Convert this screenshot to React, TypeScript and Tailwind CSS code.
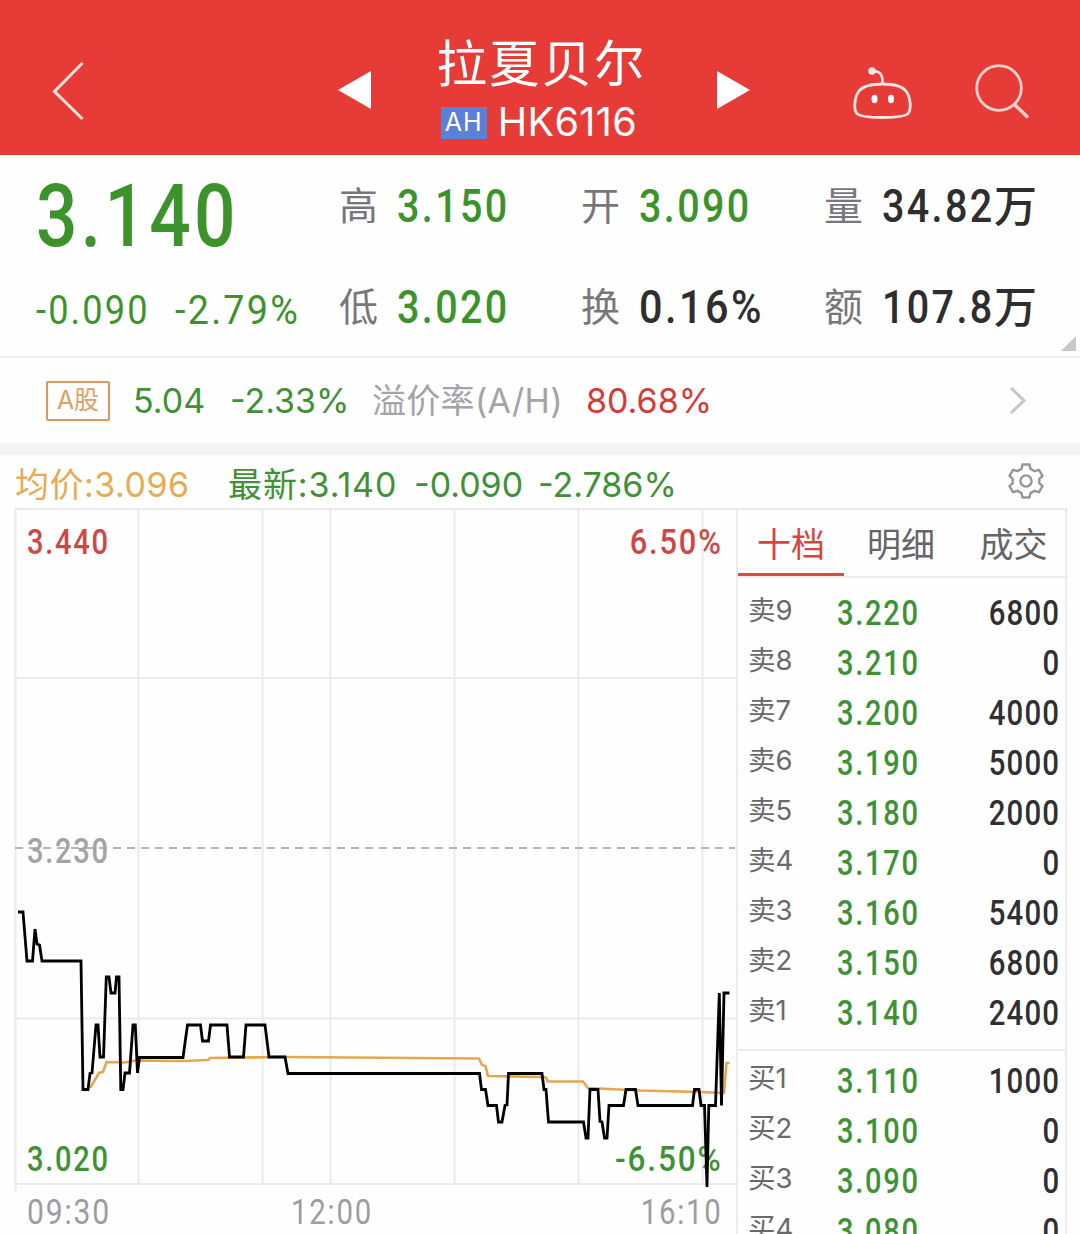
import type { ReactNode } from "react";
import { clsx } from "clsx";

type Level = { label: string; price: string; volume: string };

const SELLS: Level[] = [
  { label: "卖9", price: "3.220", volume: "6800" },
  { label: "卖8", price: "3.210", volume: "0" },
  { label: "卖7", price: "3.200", volume: "4000" },
  { label: "卖6", price: "3.190", volume: "5000" },
  { label: "卖5", price: "3.180", volume: "2000" },
  { label: "卖4", price: "3.170", volume: "0" },
  { label: "卖3", price: "3.160", volume: "5400" },
  { label: "卖2", price: "3.150", volume: "6800" },
  { label: "卖1", price: "3.140", volume: "2400" },
];

const BUYS: Level[] = [
  { label: "买1", price: "3.110", volume: "1000" },
  { label: "买2", price: "3.100", volume: "0" },
  { label: "买3", price: "3.090", volume: "0" },
  { label: "买4", price: "3.080", volume: "0" },
];

const STATS = [
  { label: "高", value: "3.150", green: true },
  { label: "开", value: "3.090", green: true },
  { label: "量", value: "34.82", unit: "万" },
  { label: "低", value: "3.020", green: true },
  { label: "换", value: "0.16%" },
  { label: "额", value: "107.8", unit: "万" },
];

// Plot coordinates, relative to the top left corner of the chart.
const PRICE_LINE =
  "18,405 23,405 27,454 32.5,454 35,422 37,437 39.5,438 42,454 81,454 83,582.5 88,582.5 90,566.5 92,566 96,518 98,518 100,550 103.5,550 106.3,470 109,470 111,486 115,486 116.5,470 119,470 120.8,582.5 123,582.5 125,566 129.5,566 133,518 135.3,518 137.5,566 139.5,550.5 183,550.5 187.5,518 200.5,518 202.5,534 208.5,534 210.5,518 227,518 229.5,550 243.5,550 246,518 265,518 269,550 285,550 288,566.5 479.5,566.5 481.5,582.5 485.5,582.5 488,598.5 496.5,598.5 498.5,615 502,615 505,598.5 507,598 508.5,566.5 542,566.5 544,582.5 546,582.5 548.5,615 583.5,615 586,631 588,631 590,582.5 598,582.5 600,614.5 602,615 604.5,631 607,631 609,598.5 623.5,598.5 626,582.5 635.5,582.5 638,598.5 692.5,598.5 694.5,582.5 699,582.5 701,598.5 704.5,598.5 707,680 708.8,598.5 715.5,598.5 719.3,486 721.5,598.5 724,486 729.5,486";

const AVERAGE_LINE =
  "90,581 99,566 103,565 106.5,555 125,555.5 135,553.5 183,554 208,553 210,551 285,550 479,551.5 482,558 485.5,559 488,569 540,570 546,570.5 548,574.5 583,574.5 588,581 640,583.5 700,585 724,586 726.5,556 729.5,556";

// Narrow, DIN-like figures.
function Num({ children, className }: { children: ReactNode; className?: string }) {
  return (
    <span className={clsx("inline-block whitespace-nowrap font-['Roboto']", className)}>
      {children}
    </span>
  );
}

function Header() {
  return (
    <header className="flex h-[155px] shrink-0 items-center bg-[#e73b38] text-white">
      <svg className="ml-[50px] mt-[26px] h-[60px] w-[36px]" viewBox="0 0 36 60" fill="none">
        <path d="M32.5 2 4.5 30.5 32.5 58" stroke="#ffe3da" strokeWidth="3" />
      </svg>
      <svg className="ml-[252px] mt-[25px] h-[38px] w-[34px]" viewBox="0 0 34 38">
        <path d="M0 19 33 0V38Z" fill="#fff" />
      </svg>
      <div className="flex w-[344px] flex-col items-center pr-[10px]">
        <h1 className="mt-[26px] pl-[5px] text-[50.5px] font-normal leading-[60px] tracking-[2px]">拉夏贝尔</h1>
        <div className="mt-[5px] flex h-[56px] items-center gap-[11px]">
          <span className="flex h-[32px] w-[46px] items-center justify-center bg-[#5a80d8] font-['Inter'] text-[25px] tracking-[1px]">
            AH
          </span>
          <span className="font-['Inter'] text-[39.5px] leading-none tracking-[0.4px]">HK6116</span>
        </div>
      </div>
      <svg className="ml-px mt-[25px] h-[38px] w-[34px]" viewBox="0 0 34 38">
        <path d="M33 19 0 0V38Z" fill="#fff" />
      </svg>
      <svg className="ml-[101px] mt-[30px] h-[56px] w-[60px]" viewBox="0 0 60 56" fill="none">
        <path
          d="M30.5 19C18 19 11 21 7 26C2.500 32 1.500 44 4.500 48C7 51.500 17 52.500 30.500 52.500C44 52.500 54 51.500 56.500 48C59.500 44 58.500 32 54 26C50 21 43 19 30.500 19Z"
          stroke="#ffe8e4"
          strokeWidth="2.800"
        />
        <path d="M20 6C27 5.500 31 9 30.500 18" stroke="#ffe8e4" strokeWidth="2.600" />
        <circle cx="20" cy="6" r="3.800" fill="#ffe8e4" />
        <ellipse cx="22.500" cy="34" rx="3" ry="4.200" fill="#fff" />
        <ellipse cx="39" cy="34" rx="3" ry="4.200" fill="#fff" />
      </svg>
      <svg className="ml-[63px] mt-[26px] h-[56px] w-[56px]" viewBox="0 0 56 56" fill="none" stroke="#ffd2cc" strokeWidth="2.800">
        <circle cx="24" cy="25" r="22.300" />
        <path d="M39 41 53 54.500" strokeWidth="3.500" />
      </svg>
    </header>
  );
}

function Quote() {
  return (
    <section className="relative flex h-[203px] shrink-0 border-b-2 border-[#f0f0f1] text-[#3c932b]">
      <div className="w-[339px] pl-[36px]">
        <Num className="mt-[11px] origin-left scale-x-[.83] text-[88px] font-medium leading-[100px] tracking-[0.045em]">
          3.140
        </Num>
        <div className="mt-[23px] flex h-[44px] items-center">
          <Num className="w-[139px] origin-left scale-x-[.88] text-[41px] font-[450] tracking-[0.06em]">-0.090</Num>
          <Num className="origin-left scale-x-[.92] text-[41px] font-[450] tracking-[0.06em]">-2.79%</Num>
        </div>
      </div>
      <div className="grid h-[202px] grid-cols-[242px_243px_1fr] grid-rows-[101px_101px]">
        {STATS.map((s) => (
          <div key={s.label} className="flex h-[102px] items-center">
            <span className="mb-[6px] w-[58px] text-[39px] leading-none text-[#78767a]">{s.label}</span>
            <span className={clsx("flex w-[155px] items-center justify-between", !s.green && "text-[#2e2d30]")}>
              <Num
                className={clsx(
                  "w-[90px] origin-left text-[47px] font-medium tracking-[0.06em]",
                  s.value.endsWith("%") ? "scale-x-[.88]" : "scale-x-[.84]",
                )}
              >
                {s.value}
              </Num>
              {s.unit && <span className="mb-[5px] text-[43px] font-medium leading-none">{s.unit}</span>}
            </span>
          </div>
        ))}
      </div>
      <svg className="absolute bottom-[5px] right-[4px] h-[15px] w-[15px]" viewBox="0 0 15 15">
        <path d="M15 0V15H0Z" fill="#c9c7ca" />
      </svg>
    </section>
  );
}

function PremiumRow() {
  return (
    <section className="flex h-[85px] shrink-0 items-center font-['Inter','Noto_Sans_CJK_SC',sans-serif] text-[34px] leading-none">
      <span className="ml-[46px] flex h-[40px] w-[64px] items-center justify-center rounded-[2px] border-2 border-[#df965d] text-[25px] text-[#dfa060]">
        A股
      </span>
      <span className="ml-[23px] w-[97px] text-[#3f9136]">5.04</span>
      <span className="w-[142px] text-[#3f9136]">-2.33%</span>
      <span className="w-[214px] tracking-[0.3px] text-[#a5a3a7]">溢价率(A/H)</span>
      <span className="text-[#d53b35]">80.68%</span>
      <svg className="ml-auto mr-[52px] h-[30px] w-[20px]" viewBox="0 0 20 30" fill="none">
        <path d="M3 2 16 14.500 3 27" stroke="#c6c5c8" strokeWidth="3" />
      </svg>
    </section>
  );
}

function SummaryRow() {
  return (
    <div className="flex h-[52px] shrink-0 items-center font-['Inter','Noto_Sans_CJK_SC',sans-serif] text-[34px] leading-none text-[#3f9136]">
      <span className="ml-[15px] mt-[8px] w-[213px] tracking-[0.5px] text-[#e7ab54]">均价:3.096</span>
      <span className="mt-[8px] w-[186px] tracking-[0.9px]">最新:3.140</span>
      <span className="mt-[8px] w-[124px]">-0.090</span>
      <span className="mt-[8px]">-2.786%</span>
      <svg className="ml-auto mr-[36px] h-[36px] w-[36px]" viewBox="0 0 36 36" fill="none" stroke="#969499" strokeWidth="2.400" strokeLinejoin="round">
        <path d="M14.500 1.500H21.500L22.500 6Q24.500 6.700 26.500 8.200L31 6.800 34.500 12.800 31.200 16Q31.500 18 31.200 20L34.500 23.200 31 29.200 26.500 27.800Q24.500 29.300 22.500 30L21.500 34.500H14.500L13.500 30Q11.500 29.300 9.500 27.800L5 29.200 1.500 23.200 4.800 20Q4.500 18 4.800 16L1.500 12.800 5 6.800 9.500 8.200Q11.500 6.700 13.500 6Z" />
        <circle cx="18" cy="18" r="5.600" />
      </svg>
    </div>
  );
}

function Chart() {
  return (
    <div className="relative h-[727px] w-[738px] shrink-0">
      {/* Grid, under the axis labels */}
      <svg className="absolute inset-0" width="738" height="727" viewBox="0 0 738 727" fill="none">
        <path
          d="M15.500 1V684M138.500 1V677M262.500 1V677M330.500 1V677M454.500 1V677M578.500 1V677M702.500 1V677M737 1V727M15 2H738M15 171H738M15 511.500H738M15 677H738"
          stroke="#ebeaec"
          strokeWidth="2"
        />
        <path d="M15 341H735" stroke="#b5b4b7" strokeWidth="2" strokeDasharray="8 6" />
      </svg>

      <div className="relative flex h-full flex-col pl-[27px] pr-[17px] text-[35px] font-medium leading-none tracking-[0.06em]">
        <div className="mt-[18px] flex justify-between text-[#cf4644]">
          <Num className="origin-left scale-x-[.83]">3.440</Num>
          <Num className="-mr-[2px] origin-right scale-x-[.88]">6.50%</Num>
        </div>
        <Num className="mt-[274px] origin-left scale-x-[.83] text-[#a3a2a5]">3.230</Num>
        <div className="mt-[273px] flex justify-between text-[#3f9136]">
          <Num className="origin-left scale-x-[.83]">3.020</Num>
          <Num className="-mr-[2px] origin-right scale-x-[.9]">-6.50%</Num>
        </div>
        <div className="mt-[18px] flex font-[450] text-[#9d9ca0]">
          <Num className="w-[264px] origin-left scale-x-[.86]">09:30</Num>
          <Num className="origin-left scale-x-[.84]">12:00</Num>
          <Num className="-mr-[2px] ml-auto origin-right scale-x-[.84]">16:10</Num>
        </div>
      </div>

      <svg className="absolute inset-0" width="738" height="727" viewBox="0 0 738 727" fill="none">
        <polyline points={AVERAGE_LINE} stroke="#e5a64e" strokeWidth="2.600" />
        <polyline points={PRICE_LINE} stroke="#000" strokeWidth="2.800" />
      </svg>
    </div>
  );
}

function LevelRow({ level }: { level: Level }) {
  return (
    <div className="flex h-[50px] items-center pl-[10px] pr-[6px] leading-none">
      <span className="-mt-[4px] w-[89px] font-['Inter','Noto_Sans_CJK_SC',sans-serif] text-[27.5px] text-[#69686b]">
        {level.label}
      </span>
      <Num className="origin-left scale-x-[.83] text-[35px] font-medium tracking-[0.06em] text-[#3f9136]">
        {level.price}
      </Num>
      <Num className="-mr-px ml-auto origin-right scale-x-[.84] text-[35px] font-medium tracking-[0.04em] text-[#302f32]">
        {level.volume}
      </Num>
    </div>
  );
}

function OrderBook() {
  return (
    <aside className="mt-px w-[329px] shrink-0 border-r-2 border-t-2 border-[#ebeaec]">
      <nav className="flex h-[68px] w-[330px] border-b-2 border-[#ebeaec] text-[34px] leading-[66px] text-[#656468]">
        <span className="h-[66px] w-[106px] border-b-[3px] border-[#d94a48] text-center text-[#d94341]">十档</span>
        <span className="w-[114px] text-center">明细</span>
        <span className="w-[110px] pl-px text-center">成交</span>
      </nav>
      <div className="pt-[10px]">
        {SELLS.map((l) => (
          <LevelRow key={l.label} level={l} />
        ))}
      </div>
      <div className="mt-[11px] border-t-2 border-[#ebeaec] pt-[5px]">
        {BUYS.map((l) => (
          <LevelRow key={l.label} level={l} />
        ))}
      </div>
    </aside>
  );
}

export default function App() {
  return (
    <main className="flex h-[1234px] w-[1080px] flex-col overflow-hidden bg-[#fefefe] font-['Noto_Sans_CJK_SC',sans-serif]">
      <Header />
      <Quote />
      <PremiumRow />
      <div className="h-[12px] shrink-0 bg-[#f5f3f6]" />
      <SummaryRow />
      <div className="flex h-[727px] shrink-0 overflow-hidden">
        <Chart />
        <OrderBook />
      </div>
    </main>
  );
}
